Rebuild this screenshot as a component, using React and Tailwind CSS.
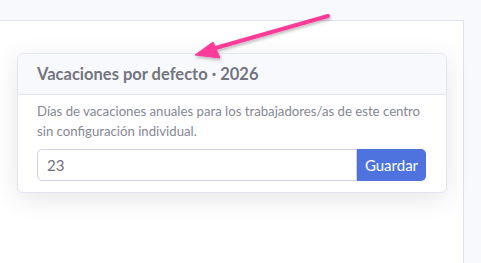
export default function App() {
  return (
    <div className="relative h-[263px] w-[481px] overflow-hidden bg-[#f8f9fc] font-['Lato',sans-serif]">
      <div className="ml-0 mt-[20px] h-[260px] w-[464px] border-r border-t border-[#e0e0ef] bg-white pl-[17px] pt-[32px]">
        <div className="w-[430px] overflow-hidden rounded-[6px] border border-[#e3e6f0] bg-white shadow-[0_6px_24px_rgba(58,59,69,0.12)]">
          <div className="flex h-[41px] items-center border-b border-[#e3e6f0] bg-[#f8f9fc] px-[19px]">
            <h2 className="text-[16.5px] font-bold text-[#73757f]">Vacaciones por defecto · 2026</h2>
          </div>
          <div className="px-[19px] pb-[11px] pt-[6px]">
            <p className="text-[13.2px] leading-[20px] text-[#858796]">
              Días de vacaciones anuales para los trabajadores/as de este centro sin configuración individual.
            </p>
            <div className="mt-[8px] flex h-[32px] w-[389px]">
              <input
                defaultValue="23"
                className="h-full flex-1 rounded-l-[5px] border border-[#d1d3e2] px-[9px] text-[15px] text-[#6e707e] outline-none"
              />
              <button className="h-full w-[69px] rounded-r-[5px] bg-[#4e73df] text-[15px] text-white">Guardar</button>
            </div>
          </div>
        </div>
      </div>
      <svg className="absolute left-0 top-0" width="481" height="263" viewBox="0 0 481 263">
        <defs>
          <filter id="sh" x="-20%" y="-50%" width="140%" height="200%">
            <feDropShadow dx="1" dy="2" stdDeviation="1.5" floodColor="#000" floodOpacity="0.25" />
          </filter>
        </defs>
        <g filter="url(#sh)" fill="#ff3b9a" stroke="#ff3b9a">
          <line x1="328" y1="16" x2="212" y2="49" strokeWidth="4" strokeLinecap="round" />
          <polygon points="195,55 213,42 220,58" strokeWidth="1" strokeLinejoin="round" />
        </g>
      </svg>
    </div>
  );
}
